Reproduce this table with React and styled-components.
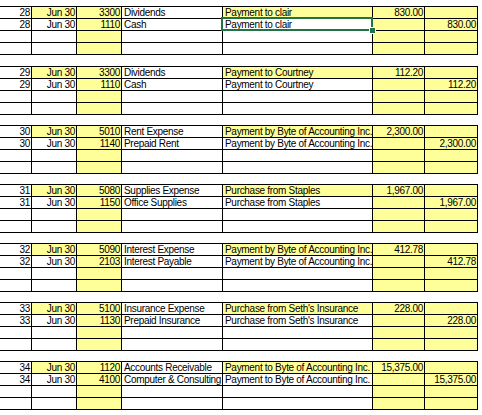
import React from 'react';
import styled, { createGlobalStyle } from 'styled-components';

const GlobalStyle = createGlobalStyle`
  html, body {
    margin: 0;
    padding: 0;
    background: #ffffff;
  }
  body {
    font-family: "Liberation Sans", Arial, sans-serif;
    font-size: 10px;
    letter-spacing: -0.3px;
    color: #000000;
  }
`;

const entries = [
  { no: 28, dr: '3300', drName: 'Dividends', cr: '1110', crName: 'Cash', desc: 'Payment to clair', amount: '830.00', selected: true },
  { no: 29, dr: '3300', drName: 'Dividends', cr: '1110', crName: 'Cash', desc: 'Payment to Courtney', amount: '112.20' },
  { no: 30, dr: '5010', drName: 'Rent Expense', cr: '1140', crName: 'Prepaid Rent', desc: 'Payment by Byte of Accounting Inc.', amount: '2,300.00' },
  { no: 31, dr: '5080', drName: 'Supplies Expense', cr: '1150', crName: 'Office Supplies', desc: 'Purchase from Staples', amount: '1,967.00' },
  { no: 32, dr: '5090', drName: 'Interest Expense', cr: '2103', crName: 'Interest Payable', desc: 'Payment by Byte of Accounting Inc.', amount: '412.78' },
  { no: 33, dr: '5100', drName: 'Insurance Expense', cr: '1130', crName: 'Prepaid Insurance', desc: "Purchase from Seth's Insurance", amount: '228.00' },
  { no: 34, dr: '1120', drName: 'Accounts Receivable', cr: '4100', crName: 'Computer & Consulting', desc: 'Payment to Byte of Accounting Inc.', amount: '15,375.00' },
];

const Sheet = styled.div`
  display: flex;
  flex-direction: column;
  gap: 10px;
  padding-top: 6px;
  width: 482px;
  height: 415px;
  box-sizing: border-box;
  overflow: hidden;
`;

const Block = styled.div`
  display: grid;
  grid-template-columns: 32px 45px 45px 101px 150px 52px 53px;
  grid-auto-rows: 12px;
  width: 478px;
  border-top: 1px solid #000;
  &:first-child {
    margin-bottom: 1px;
  }
`;

const Cell = styled.div`
  position: relative;
  box-sizing: border-box;
  height: 12px;
  border-right: 1px solid #000;
  border-bottom: 1px solid #000;
  background: ${p => (p.$fill ? '#ffff99' : '#ffffff')};
  text-align: ${p => (p.$right ? 'right' : 'left')};
  padding: ${p => (p.$right ? '0 1px 0 0' : '0 0 0 2px')};
  line-height: 12px;
  white-space: nowrap;
  overflow: visible;
`;

const Selection = styled.div`
  position: absolute;
  top: -2px;
  left: -2px;
  right: -1px;
  bottom: -1px;
  border: 2px solid #217346;
  z-index: 2;
  pointer-events: none;
`;

const Handle = styled.span`
  position: absolute;
  right: -4px;
  bottom: -4px;
  width: 5px;
  height: 5px;
  background: #217346;
  box-shadow: 0 0 0 1px #ffffff;
`;

const rowsFor = e => [
  [
    { v: e.no, r: true },
    { v: 'Jun 30', r: true, f: true },
    { v: e.dr, r: true, f: true },
    { v: e.drName },
    { v: e.desc, f: true },
    { v: e.amount, r: true, f: true },
    { v: '', f: true },
  ],
  [
    { v: e.no, r: true },
    { v: 'Jun 30', r: true },
    { v: e.cr, r: true, f: true },
    { v: e.crName },
    { v: e.desc, sel: e.selected },
    { v: '', f: true },
    { v: e.amount, r: true, f: true },
  ],
  ...[0, 1].map(() => [
    { v: '' },
    { v: '' },
    { v: '', f: true },
    { v: '' },
    { v: '' },
    { v: '', f: true },
    { v: '', f: true },
  ]),
];

const Entry = ({ entry }) => (
  <Block>
    {rowsFor(entry).map((row, i) =>
      row.map((c, j) => (
        <Cell key={`${i}-${j}`} $fill={c.f} $right={c.r}>
          {c.v}
          {c.sel && (
            <Selection>
              <Handle />
            </Selection>
          )}
        </Cell>
      ))
    )}
  </Block>
);

export default function App() {
  return (
    <>
      <GlobalStyle />
      <Sheet>
        {entries.map(e => (
          <Entry key={e.no} entry={e} />
        ))}
      </Sheet>
    </>
  );
}
